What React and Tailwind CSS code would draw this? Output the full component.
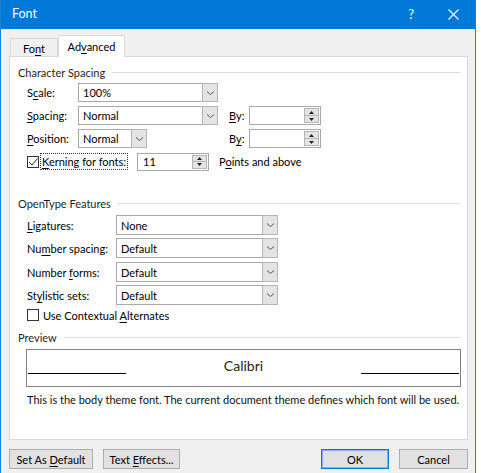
import React from 'react';

const U = ({ children }) => <span className="underline underline-offset-[2px]">{children}</span>;

function Chevron() {
  return (
    <svg width="9" height="6" viewBox="0 0 9 6" className="block">
      <path d="M1 1.5 L4.5 4.5 L8 1.5" fill="none" stroke="#555" strokeWidth="1" />
    </svg>
  );
}

function Combo({ value, width }) {
  return (
    <div className={`h-full ${width} flex bg-white border border-[#a9a9a9]`}>
      <div className="flex-1 flex items-center pl-[4px] text-black">{value}</div>
      <div className="w-[16px] flex items-center justify-center bg-[#e4e4e4] border-l border-[#b5b5b5] m-[-1px] border-y border-r">
        <Chevron />
      </div>
    </div>
  );
}

function Spin({ value, width }) {
  return (
    <div className={`h-full ${width} flex bg-white border border-[#a9a9a9]`}>
      <div className="flex-1 flex items-center pl-[5px]">{value}</div>
      <div className="w-[15px] m-px flex flex-col bg-[#e4e4e4] border border-[#b5b5b5]">
        <div className="flex-1 flex items-center justify-center border-b border-[#b5b5b5]">
          <svg width="5" height="3" viewBox="0 0 5 3" className="block"><path d="M0 3 L2.5 0 L5 3 Z" fill="#222" /></svg>
        </div>
        <div className="flex-1 flex items-center justify-center">
          <svg width="5" height="3" viewBox="0 0 5 3" className="block"><path d="M0 0 L2.5 3 L5 0 Z" fill="#222" /></svg>
        </div>
      </div>
    </div>
  );
}

function Checkbox({ checked }) {
  return (
    <div className="w-[12px] h-[12px] border border-[#333] bg-white flex items-center justify-center">
      {checked && (
        <svg width="10" height="10" viewBox="0 0 10 10" className="block">
          <path d="M1 5 L4 8 L9.5 1.5" fill="none" stroke="#222" strokeWidth="1" />
        </svg>
      )}
    </div>
  );
}

function Header({ children }) {
  return (
    <div className="h-[14px] flex items-center text-[#1e1e1e]">
      <span>{children}</span>
      <div className="flex-1 h-px bg-[#dedede] ml-[7px]" />
    </div>
  );
}

function Button({ children, width, primary }) {
  return (
    <div className={`h-[20px] ${width} flex items-center justify-center bg-[#e1e1e1] border ${primary ? 'border-[#0078d7] outline outline-1 outline-[#7eb4ea] -outline-offset-2' : 'border-[#adadad]'}`}>
      <span>{children}</span>
    </div>
  );
}

export default function App() {
  const featureRows = [
    { lab: <><U>L</U>igatures:</>, value: 'None', mt: 'mt-[5px]' },
    { lab: <>Nu<U>m</U>ber spacing:</>, value: 'Default', mt: 'mt-[3px]' },
    { lab: <>Number <U>f</U>orms:</>, value: 'Default', mt: 'mt-[4px]' },
    { lab: <>St<U>y</U>listic sets:</>, value: 'Default', mt: 'mt-[3px]' },
  ];

  return (
    <div className="w-[481px] h-[473px] bg-white overflow-hidden font-['Lato',sans-serif] text-[11px] text-black leading-none">
      <div className="w-[476px] h-full bg-[#f0f0f0] border-x border-[#1883d7] flex flex-col">
        {/* title bar */}
        <div className="h-[29px] bg-[#0078d7] flex items-center text-white text-[12.5px] pl-[11px] pr-[16px]">
          <span className="flex-1">Font</span>
          <span className="mr-[34px] text-[13px]">?</span>
          <svg width="11" height="11" viewBox="0 0 11 11" className="block">
            <path d="M0.5 0.5 L10.5 10.5 M10.5 0.5 L0.5 10.5" stroke="#fff" strokeWidth="1.1" />
          </svg>
        </div>

        {/* tabs */}
        <div className="mt-[6px] h-[21px] flex items-end pl-[9px]">
          <div className="w-[48px] h-[18px] border border-b-0 border-[#d9d9d9] flex items-center justify-center pt-[1px]">
            <span>Fo<U>n</U>t</span>
          </div>
          <div className="w-[67px] h-[22px] -mb-px bg-white border border-b-0 border-[#d9d9d9] flex items-center justify-center relative z-10">
            <span>Ad<U>v</U>anced</span>
          </div>
        </div>

        {/* panel */}
        <div className="ml-[8px] w-[459px] h-[384px] bg-white border border-[#d9d9d9] pl-[8px] pr-[6px] flex flex-col">
          <div className="mt-[8px]">
            <Header>Character Spacing</Header>
          </div>

          <div className="pl-[9px] mt-[4px] flex flex-col gap-[4px]">
            <div className="h-[19px] flex items-center">
              <span className="w-[51px]">S<U>c</U>ale:</span>
              <Combo value="100%" width="w-[140px]" />
            </div>
            <div className="h-[19px] flex items-center">
              <span className="w-[51px]"><U>S</U>pacing:</span>
              <Combo value="Normal" width="w-[140px]" />
              <span className="ml-[11px] w-[20px]"><U>B</U>y:</span>
              <Spin value="" width="w-[72px]" />
            </div>
            <div className="h-[19px] flex items-center">
              <span className="w-[51px]"><U>P</U>osition:</span>
              <Combo value="Normal" width="w-[69px]" />
              <span className="ml-[82px] w-[20px]">B<U>y</U>:</span>
              <Spin value="" width="w-[72px]" />
            </div>
            <div className="h-[19px] flex items-center">
              <Checkbox checked />
              <span className="ml-[1px] px-[1px] py-[2px] border border-dotted border-[#333]">
                <U>K</U>erning for fonts:
              </span>
              <div className="ml-[9px] h-[18px] flex">
                <Spin value="11" width="w-[72px]" />
              </div>
              <span className="ml-[10px]">P<U>o</U>ints and above</span>
            </div>
          </div>

          <div className="mt-[25px]">
            <Header>OpenType Features</Header>
          </div>

          <div className="pl-[9px] flex flex-col">
            {featureRows.map((r, i) => (
              <div key={i} className={`h-[20px] flex items-center ${r.mt}`}>
                <span className="w-[89px]">{r.lab}</span>
                <Combo value={r.value} width="w-[162px]" />
              </div>
            ))}
            <div className="mt-[3px] h-[14px] flex items-center">
              <Checkbox />
              <span className="ml-[4px]">Use Contextual <U>A</U>lternates</span>
            </div>
          </div>

          <div className="mt-[8px]">
            <Header>Preview</Header>
          </div>

          <div className="ml-[8px] mt-[5px] w-[435px] h-[38px] border border-[#828282] flex items-center px-px">
            <div className="w-[98px] h-px bg-black mt-[10px]" />
            <div className="flex-1 text-center text-[14px] text-[#222] -mt-[4px]">Calibri</div>
            <div className="w-[98px] h-px bg-black mt-[10px]" />
          </div>

          <div className="mt-[5px] h-[14px] flex items-center pl-[9px] whitespace-nowrap text-[#111]">
            This is the body theme font. The current document theme defines which font will be used.
          </div>
        </div>

        {/* buttons */}
        <div className="mt-[9px] flex pl-[8px]">
          <Button width="w-[84px]">Set As <U>D</U>efault</Button>
          <div className="ml-[10px]">
            <Button width="w-[77px]">Text <U>E</U>ffects...</Button>
          </div>
          <div className="ml-[141px]">
            <Button width="w-[68px]" primary>OK</Button>
          </div>
          <div className="ml-[10px]">
            <Button width="w-[69px]">Cancel</Button>
          </div>
        </div>
      </div>
    </div>
  );
}
